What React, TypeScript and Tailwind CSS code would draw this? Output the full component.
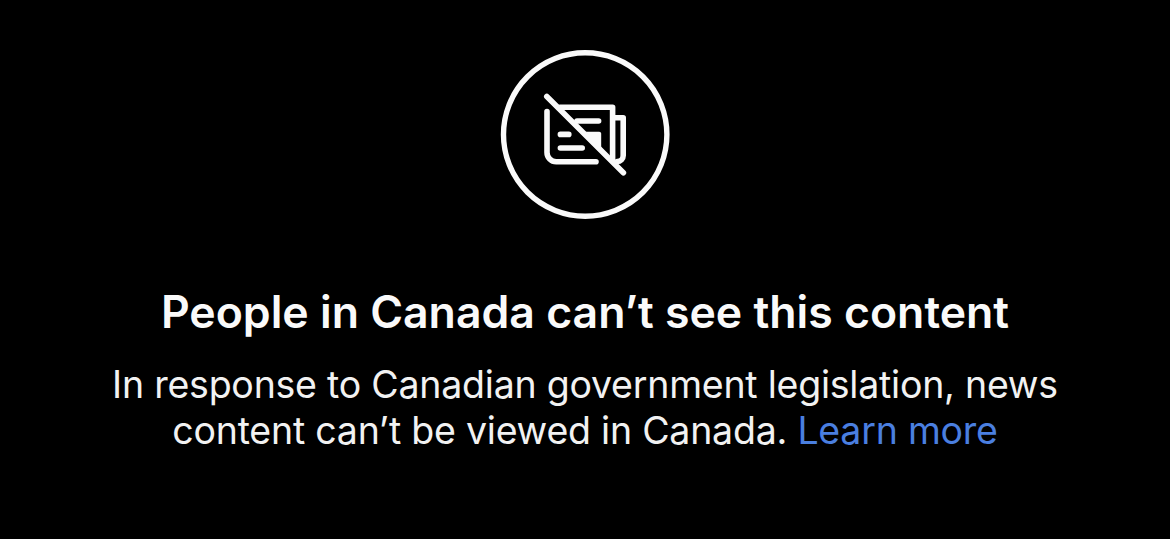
function NewsOffIcon() {
  return (
    <svg
      className="w-[170px] h-[170px] shrink-0 text-[#fafafa]"
      viewBox="0 0 170 170"
      fill="none"
      stroke="currentColor"
      strokeWidth="5.6"
      strokeLinecap="round"
      strokeLinejoin="round"
      aria-hidden="true"
    >
      <circle cx="85.2" cy="85.5" r="81.7" strokeWidth="5.4" />
      {/* front page */}
      <path d="M47 62.5V103.5a9.2 9.2 0 0 0 9.2 9.2H96" />
      <path d="M60 58.2H112.6V112" />
      {/* folded page behind */}
      <path d="M113 68.8H123.2V106.5a6 6 0 0 1-6 6" />
      {/* article lines */}
      <path d="M77 72H98.6M60.4 85.4H68.8M60.4 99H82.2" />
      <path d="M85.5 82.8H99.2a2 2 0 0 1 2 2V101Z" fill="currentColor" stroke="none" />
      <path d="M46.8 47.4L123.4 123.7" />
    </svg>
  );
}

export default function App() {
  return (
    <main className="flex h-[539px] w-full flex-col items-center bg-black pt-[49px] text-center font-['Inter',sans-serif]">
      <NewsOffIcon />
      <h1 className="mt-[65px] text-[44.6px] leading-[56px] font-semibold whitespace-nowrap text-[#fafafa]">
        People in Canada can’t see this content
      </h1>
      <p className="mt-[22px] text-[37.5px] leading-[45.5px] tracking-[-0.23px] whitespace-nowrap text-[#f2f2f2]">
        In response to Canadian government legislation, news
        <br />
        content can’t be viewed in Canada.{" "}
        <a href="#" className="text-[#4a7fe0]">
          Learn more
        </a>
      </p>
    </main>
  );
}
